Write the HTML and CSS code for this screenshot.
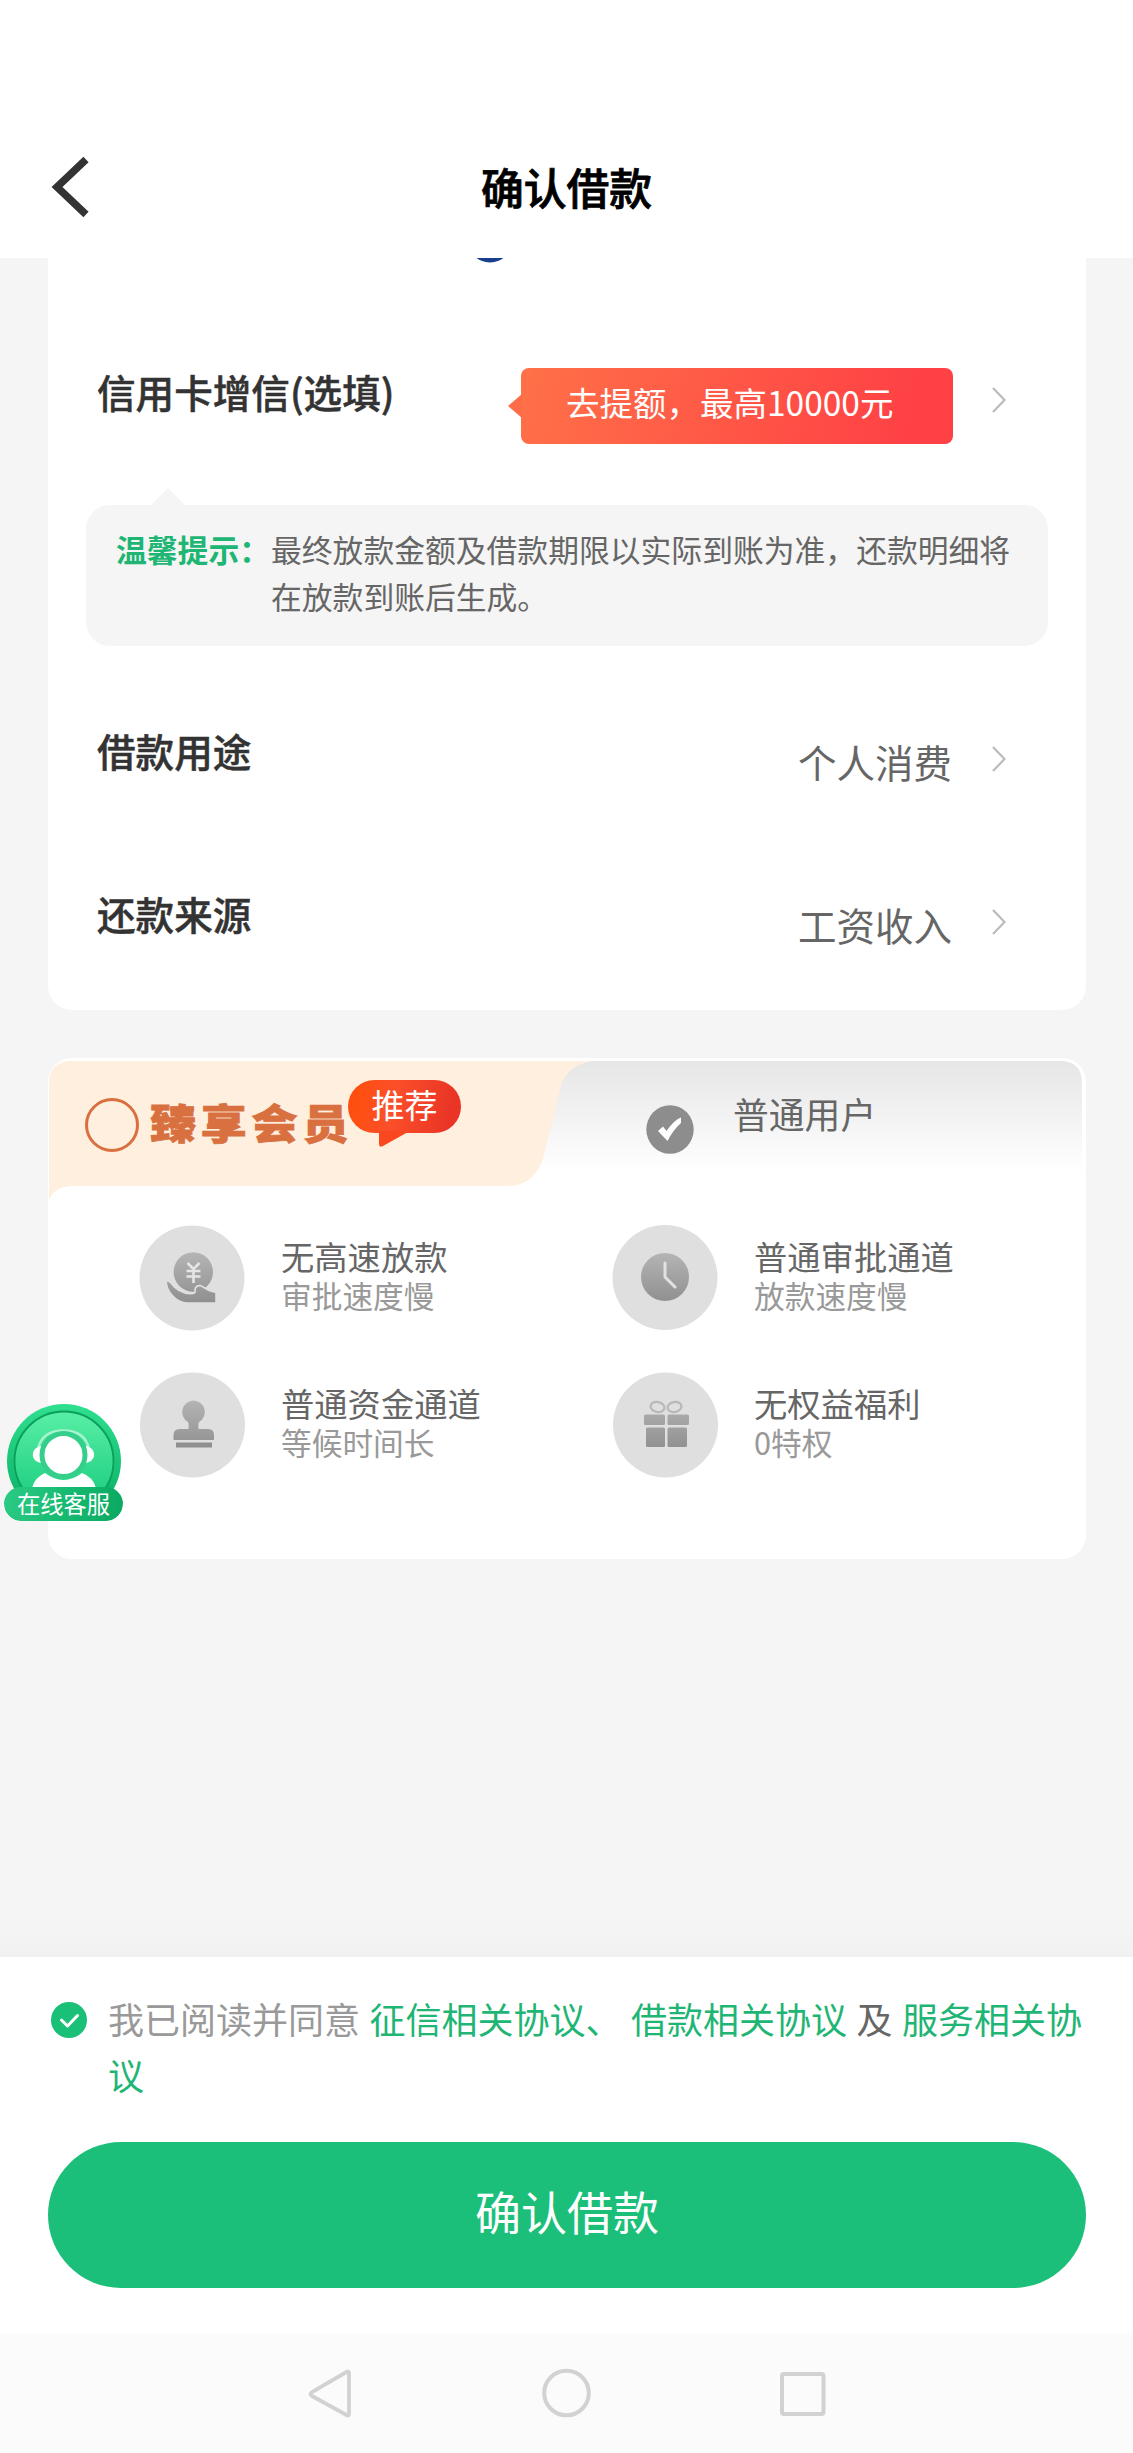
FILE: index.html
```html
<!DOCTYPE html>
<html lang="zh-CN">
<head>
<meta charset="utf-8">
<title>确认借款</title>
<link rel="stylesheet" href="styles.css">
</head>
<body>
<div class="page">
  <header class="header">
    <svg class="back" width="40" height="62" viewBox="0 0 40 62"><path d="M35 3.500L6 31L35 58.500" fill="none" stroke="#333" stroke-width="7.500"/></svg>
    <h1 class="title">确认借款</h1>
  </header>

  <main class="content">
    <section class="card loan">
      <svg class="bank-logo" width="28" height="5" viewBox="0 0 28 5"><circle cx="14" cy="-18" r="22.500" fill="#173f8d"/></svg>
      <div class="row credit">
        <span class="label">信用卡增信(选填)</span>
        <span class="promo">去提额，最高10000元</span>
        <svg class="chevron" width="14" height="26" viewBox="0 0 14 26"><path d="M1 1L12.500 13L1 25" fill="none" stroke="#bbb" stroke-width="2.200"/></svg>
      </div>
      <div class="tip">
        <strong class="tip-title">温馨提示：</strong>
        <p class="tip-text">最终放款金额及借款期限以实际到账为准，还款明细将在放款到账后生成。</p>
      </div>
      <div class="row">
        <span class="label">借款用途</span>
        <span class="value">个人消费</span>
        <svg class="chevron" width="14" height="26" viewBox="0 0 14 26"><path d="M1 1L12.500 13L1 25" fill="none" stroke="#bbb" stroke-width="2.200"/></svg>
      </div>
      <div class="row">
        <span class="label">还款来源</span>
        <span class="value">工资收入</span>
        <svg class="chevron" width="14" height="26" viewBox="0 0 14 26"><path d="M1 1L12.500 13L1 25" fill="none" stroke="#bbb" stroke-width="2.200"/></svg>
      </div>
    </section>

    <section class="card member">
      <div class="tabs">
        <svg class="tabs-bg" width="1038" height="144" viewBox="0 0 1038 144">
          <defs>
            <linearGradient id="tabGrey" x1="0" y1="0" x2="0" y2="1"><stop offset="0" stop-color="#e6e6e6"/><stop offset="1" stop-color="#fff"/></linearGradient>
          </defs>
          <path d="M480 3H1012Q1034 3 1034 25V114H480Z" fill="url(#tabGrey)"/>
          <path d="M1 26Q1 3 24 3H546Q518 6 512 31L496 97Q488 128 459 128H26Q5 128 1 143Z" fill="#ffefdf"/>
        </svg>
        <div class="tab vip">
          <svg class="ring" width="54" height="54" viewBox="0 0 54 54"><circle cx="27" cy="27" r="25.500" fill="none" stroke="#d9703f" stroke-width="3"/></svg>
          <span class="vip-name">臻享会员</span>
          <span class="badge">推荐<svg class="badge-tail" width="32" height="17" viewBox="0 0 32 17"><path d="M1 0V13Q1 17 5 15L30 1V0Z" fill="#f9481f"/></svg></span>
        </div>
        <div class="tab normal">
          <svg class="checked" width="48" height="49" viewBox="0 0 48 49"><ellipse cx="24" cy="24.500" rx="23.700" ry="24.300" fill="#8d8d8d"/><path d="M12 26L17 21.500L20.500 26Q28 15 35 12.500V18Q27 25 21.500 36Z" fill="#fff"/></svg>
          <span class="normal-name">普通用户</span>
        </div>
      </div>
      <div class="features">
        <div class="feature">
          <svg class="ficon" width="106" height="106" viewBox="0 0 106 106">
            <defs><linearGradient id="g" gradientUnits="userSpaceOnUse" x1="0" y1="27" x2="0" y2="78"><stop offset="0" stop-color="#b5b5b5"/><stop offset="1" stop-color="#8f8f8f"/></linearGradient></defs>
            <circle cx="53" cy="53" r="52.500" fill="#dfdfdf"/>
            <circle cx="54.300" cy="47" r="19.700" fill="url(#g)"/>
            <path d="M48.500 38L54.500 44L60.500 38M54.500 44V58M47.500 46H61.500M47.500 51.500H61.500" fill="none" stroke="#e6e6e6" stroke-width="2.600"/>
            <path d="M27.300 58Q27 54.500 31 57C37 65 45 69.500 54 68.500Q57 68.500 56 64.500Q57 60 62 60.700L70 65.500L77 67.500V78H48C38 77 29 69 27.300 58Z" fill="url(#g)" stroke="#dfdfdf" stroke-width="1.600"/>
          </svg>
          <div><p class="ftitle">无高速放款</p><p class="fsub">审批速度慢</p></div>
        </div>
        <div class="feature">
          <svg class="ficon" width="106" height="106" viewBox="0 0 106 106">
            <circle cx="53" cy="52.500" r="52.500" fill="#dfdfdf"/>
            <circle cx="53" cy="52" r="24" fill="url(#g)"/>
            <path d="M53 38V52L63 62" fill="none" stroke="#e2e2e2" stroke-width="3" stroke-linecap="round" stroke-linejoin="round"/>
          </svg>
          <div><p class="ftitle">普通审批通道</p><p class="fsub">放款速度慢</p></div>
        </div>
        <div class="feature">
          <svg class="ficon" width="106" height="106" viewBox="0 0 106 106">
            <circle cx="53.500" cy="53" r="52.500" fill="#dfdfdf"/>
            <path d="M54.500 28.500A11.500 11.500 0 0 1 60 50Q59 52 59.500 57H69Q75 57 75 63V68H34.500V63Q34.500 57 40.500 57H49.500Q50 52 49 50A11.500 11.500 0 0 1 54.500 28.500Z" fill="url(#g)"/>
            <path d="M37 70.500H73V75.500H37Z" fill="#8f8f8f"/>
          </svg>
          <div><p class="ftitle">普通资金通道</p><p class="fsub">等候时间长</p></div>
        </div>
        <div class="feature">
          <svg class="ficon" width="106" height="106" viewBox="0 0 106 106">
            <circle cx="53.500" cy="53" r="52.500" fill="#dfdfdf"/>
            <g fill="none" stroke="#b8b8b8" stroke-width="2.200"><ellipse cx="45.500" cy="35" rx="7" ry="5" transform="rotate(12 45.500 35)"/><ellipse cx="62.500" cy="35" rx="7" ry="5" transform="rotate(-12 62.500 35)"/></g>
            <g fill="url(#g)"><rect x="32" y="42.500" width="21" height="10.500" rx="1.500"/><rect x="55.500" y="42.500" width="21.500" height="10.500" rx="1.500"/><rect x="34" y="55.500" width="19" height="19.500" rx="1.500"/><rect x="55.500" y="55.500" width="19.500" height="19.500" rx="1.500"/></g>
          </svg>
          <div><p class="ftitle">无权益福利</p><p class="fsub">0特权</p></div>
        </div>
      </div>
    </section>
  </main>

  <footer class="footer">
    <div class="agree">
      <svg class="agree-check" width="36" height="36" viewBox="0 0 36 36"><circle cx="18" cy="18" r="18" fill="#1abf78"/><path d="M10.500 18L16.500 24L26.500 13.500" fill="none" stroke="#fff" stroke-width="3" stroke-linecap="round" stroke-linejoin="round"/></svg>
      <p class="agree-text">我已阅读并同意 <a>征信相关协议、</a> <a>借款相关协议</a> <span class="and">及</span> <a>服务相关协议</a></p>
    </div>
    <button class="submit">确认借款</button>
  </footer>

  <nav class="navbar">
    <svg width="50" height="50" viewBox="0 0 50 50"><path d="M40.500 4Q43 2.500 43 5.500V45.500Q43 48.500 40.500 47L6 28Q3 26 6 24Z" fill="none" stroke="#d2d2d2" stroke-width="3.800"/></svg>
    <svg width="50" height="50" viewBox="0 0 50 50"><circle cx="24.500" cy="25" r="22.300" fill="none" stroke="#d2d2d2" stroke-width="4"/></svg>
    <svg width="50" height="50" viewBox="0 0 50 50"><rect x="4" y="6" width="41.500" height="40" rx="2" fill="none" stroke="#d2d2d2" stroke-width="4"/></svg>
  </nav>

  <a class="service">
    <svg class="service-face" width="116" height="116" viewBox="0 0 116 116">
      <defs>
        <linearGradient id="sOuter" x1="0" y1="0" x2="0" y2="1"><stop offset="0" stop-color="#2fe08f"/><stop offset="1" stop-color="#06ab62"/></linearGradient>
        <linearGradient id="sInner" x1="0" y1="0" x2="0" y2="1"><stop offset="0" stop-color="#58efa5"/><stop offset="1" stop-color="#16c97c"/></linearGradient>
      </defs>
      <circle cx="58" cy="57" r="57" fill="url(#sOuter)"/>
      <circle cx="58" cy="57" r="49.500" fill="url(#sInner)" stroke="#0a9f5c" stroke-width="1.800"/>
      <path d="M32 45Q36 26.500 57.500 26.500Q79 26.500 83 45" fill="none" stroke="#a6f5d0" stroke-width="2.600"/>
      <path d="M35 42C24 44 24 58 36 59ZM80 42C91 44 91 58 79 59Z" fill="#fff"/>
      <path d="M26 84Q29 73 39 69Q57.500 83 76 69Q87 73 90 84Z" fill="#fff"/>
      <circle cx="57.500" cy="51" r="21.500" fill="#fff" stroke="#35cf8b" stroke-width="5"/>
    </svg>
    <span class="service-label">在线客服</span>
  </a>
</div>
</body>
</html>
```
FILE: styles.css
```css
* { box-sizing: border-box; }
body {
  margin: 0;
  background: #f5f5f5;
  font-family: "Noto Sans CJK SC", sans-serif;
  color: #333;
}
h1, p { margin: 0; font-weight: 400; }
svg { display: block; flex: none; }
.page {
  position: relative;
  width: 1133px;
  height: 2453px;
  display: flex;
  flex-direction: column;
  overflow: hidden;
}

.header {
  height: 258px;
  flex: none;
  padding: 156px 51px 0;
  background: #fff;
  display: grid;
  grid-template-columns: 40px 1fr 40px;
}
.title {
  text-align: center;
  font-size: 42.8px;
  line-height: 60px;
  font-weight: 500;
  color: #000;
  -webkit-text-stroke: .8px #000;
}

.content {
  flex: 1;
  padding: 0 47px 0 48px;
  display: flex;
  flex-direction: column;
  gap: 48px;
  background: linear-gradient(#f5f5f5 1660px, #f1f1f1 1700px);
}
.card { background: #fff; border-radius: 24px; flex: none; }
.loan { height: 752px; border-radius: 0 0 24px 24px; }
.bank-logo { margin-left: 428px; }
.row {
  display: flex;
  align-items: flex-start;
  height: 80px;
  padding: 0 80px 0 49px;
  margin-top: 83px;
}
.row.credit { margin-top: 101px; }
.label {
  flex: 1;
  font-size: 38.6px;
  line-height: 50px;
  font-weight: 500;
  margin-top: 0;
  -webkit-text-stroke: .5px #333;
}
.value {
  font-size: 38.5px;
  line-height: 50px;
  margin-top: 11px;
  margin-right: 2px;
  color: #666;
}
.chevron { margin: 21px 0 0 38px; }
.credit .label { margin-top: 2px; }
.credit .chevron { margin-top: 23px; margin-left: 39px; }
.promo {
  position: relative;
  margin-top: 4px;
  width: 432px;
  height: 76px;
  padding-left: 45px;
  line-height: 68px;
  font-size: 33.5px;
  color: #fff;
  border-radius: 8px;
  background: linear-gradient(100deg, #ff7048, #ff4145 90%);
}
.promo::before {
  content: "";
  position: absolute;
  left: -13px;
  top: 26px;
  border: solid transparent;
  border-width: 12px 14px 12px 0;
  border-right-color: #ff6c48;
}
.tip {
  position: relative;
  display: flex;
  height: 141px;
  margin: 61px 38px 0;
  padding: 20px 33px 0 30px;
  border-radius: 24px;
  background: #f5f5f5;
  font-size: 30.8px;
  line-height: 47px;
}
.tip::before {
  content: "";
  position: absolute;
  left: 64px;
  top: -17px;
  border: solid transparent;
  border-width: 0 18px 18px;
  border-bottom-color: #f5f5f5;
}
.tip-title { width: 155px; flex: none; color: #1fb574; font-weight: 700; }
.tip-text { color: #666; }
.tip + .row { margin-top: 79px; }

.member { height: 501px; }
.tabs { position: relative; display: flex; height: 144px; }
.tabs-bg { position: absolute; left: 0; top: 0; }
.tab { position: relative; display: flex; align-items: flex-start; }
.vip { width: 550px; padding-left: 37px; }
.ring { margin-top: 40px; }
.vip-name {
  margin: 35px 0 0 11px;
  width: 198px;
  font-size: 46px;
  line-height: 56px;
  letter-spacing: 4.8px;
  font-weight: 900;
  color: #d9703f;
  -webkit-text-stroke: 1px #d9703f;
  transform: scaleY(.88);
  white-space: nowrap;
}
.badge {
  position: relative;
  width: 113px;
  height: 53px;
  margin-top: 22px;
  border-radius: 27px;
  background: linear-gradient(100deg, #ff4f10 10%, #fb4f2a 40%, #e93426 90%);
  color: #fff;
  font-size: 33px;
  line-height: 48px;
  text-align: center;
}
.badge-tail { position: absolute; left: 30px; top: 51px; }
.checked { margin: 47px 0 0 48px; }
.normal-name { margin: 30px 0 0 39px; font-size: 35.8px; line-height: 50px; color: #666; }

.features {
  display: grid;
  grid-template-columns: 473px 1fr;
  grid-auto-rows: 147px;
  padding: 23px 0 0 91px;
}
.feature { display: flex; gap: 36px; }
.ftitle { margin-top: 11px; font-size: 33.3px; line-height: 40px; color: #666; }
.fsub { font-size: 30.7px; line-height: 38px; color: #999; }

.footer { height: 376px; flex: none; padding: 33px 47px 0 48px; background: #fff; }
.agree { display: flex; padding-left: 3px; }
.agree-check { margin-top: 12px; }
.agree-text {
  margin-left: 21px;
  width: 982px;
  font-size: 36px;
  line-height: 56px;
  word-spacing: 1.4px;
  color: #999;
}
.agree-text a { color: #1fb574; }
.agree-text .and { color: #666; }
.submit {
  display: block;
  width: 1038px;
  height: 146px;
  margin-top: 40px;
  padding: 0 0 11px;
  border: 0;
  border-radius: 73px;
  background: #1cbf79;
  color: #fff;
  font: 400 46px "Noto Sans CJK SC", sans-serif;
}
.navbar {
  height: 120px;
  flex: none;
  padding: 35px 0 0 306px;
  display: flex;
  gap: 186px;
  background: #fbfbfb;
}

.service {
  position: absolute;
  left: 4px;
  top: 1404px;
  width: 119px;
  height: 117px;
  overflow: hidden;
  border-radius: 0 0 17px 17px;
}
.service-face { margin-left: 2px; }
.service-label {
  position: absolute;
  left: 0;
  bottom: 0;
  width: 119px;
  height: 34px;
  border-radius: 17px;
  background: linear-gradient(100deg, #2ccb85, #14b76e 60%, #0ba862);
  color: #fff;
  font-size: 23.3px;
  line-height: 32px;
  text-align: center;
}
```
